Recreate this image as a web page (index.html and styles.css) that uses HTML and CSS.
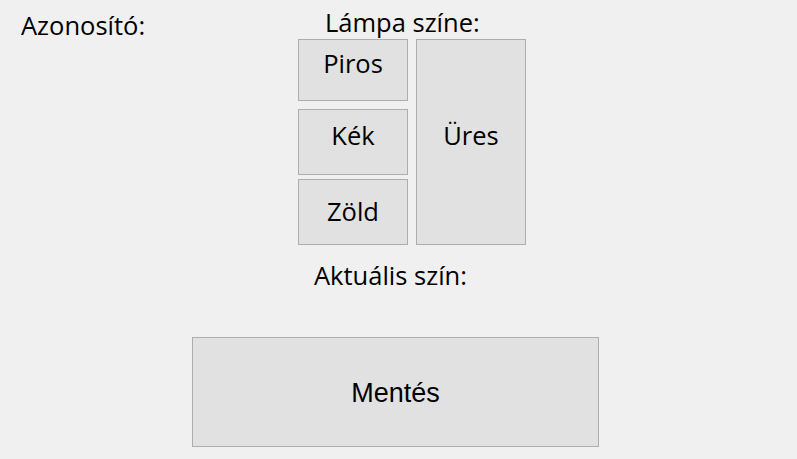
FILE: index.html
```html
<!DOCTYPE html>
<html lang="hu">
<head>
<meta charset="utf-8">
<title>Lámpa</title>
<link rel="stylesheet" href="styles.css">
</head>
<body>
<div class="window">
  <div class="top">
    <div class="id-label">Azonosító:</div>
    <div class="lamp">
      <div class="lamp-title">Lámpa színe:</div>
      <div class="lamp-grid">
        <button class="btn btn-piros">Piros</button>
        <button class="btn btn-ures">Üres</button>
        <button class="btn btn-kek">Kék</button>
        <button class="btn btn-zold">Zöld</button>
      </div>
      <div class="current">Aktuális szín:</div>
    </div>
  </div>
  <button class="save">Mentés</button>
</div>
</body>
</html>
```

FILE: styles.css
```css
html, body {
  margin: 0;
  padding: 0;
  background: #f0f0f0;
}

.window {
  width: 797px;
  height: 459px;
  background: #f0f0f0;
  font-family: "Open Sans", "Noto Sans", sans-serif;
  font-size: 25.5px;
  color: #000;
  overflow: hidden;
}

.top {
  display: flex;
}

.id-label {
  box-sizing: border-box;
  width: 298px;
  padding-left: 21px;
  padding-top: 9px;
  line-height: 32px;
}

.lamp {
  display: flex;
  flex-direction: column;
  width: 228px;
}

.lamp-title {
  padding-left: 27px;
  padding-top: 6px;
  line-height: 32px;
  white-space: nowrap;
}

.lamp-grid {
  margin-top: 1px;
  display: grid;
  grid-template-columns: 110px 110px;
  grid-template-rows: 62px 74px 70px;
  column-gap: 8px;
}

.btn {
  box-sizing: border-box;
  margin: 0;
  border: 1px solid #adadad;
  background: #e1e1e1;
  font-family: inherit;
  font-size: inherit;
  color: #000;
  line-height: 1;
  padding: 0;
  display: flex;
  align-items: center;
  justify-content: center;
}

.btn-piros {
  grid-column: 1;
  grid-row: 1;
  height: 62px;
  padding-bottom: 13px;
}

.btn-kek {
  grid-column: 1;
  grid-row: 2;
  align-self: end;
  height: 66px;
  padding-bottom: 12px;
}

.btn-zold {
  grid-column: 1;
  grid-row: 3;
  align-self: end;
  height: 66px;
  padding-bottom: 0;
}

.btn-ures {
  grid-column: 2;
  grid-row: 1 / 4;
  padding-bottom: 12px;
}

.current {
  margin-top: 14px;
  padding-left: 16px;
  line-height: 32px;
  white-space: nowrap;
}

.save {
  display: block;
  box-sizing: border-box;
  margin: 46px 0 0 192px;
  width: 407px;
  height: 110px;
  border: 1px solid #adadad;
  background: #e1e1e1;
  font-family: "Liberation Sans", Arial, sans-serif;
  font-size: 27px;
  color: #000;
  padding: 3px 0 0 0;
}
```
